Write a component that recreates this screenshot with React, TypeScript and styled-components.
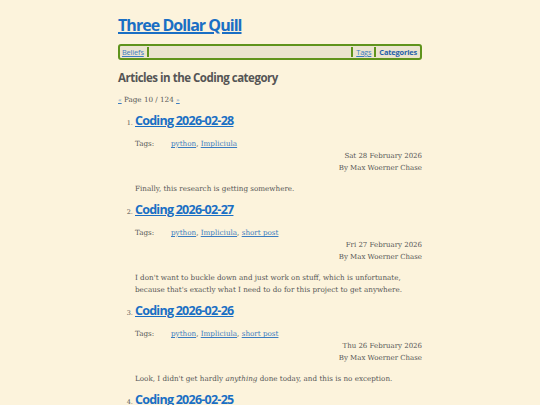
import React from "react";
import styled, { createGlobalStyle } from "styled-components";

const Global = createGlobalStyle`
  html, body { margin: 0; padding: 0; background: #fcf3dc; }
  body { font-family: "DejaVu Serif", serif; color: #444; }
`;

const Page = styled.div`
  width: 304px;
  margin: 0 auto;
  padding-top: 14px;
`;

const SiteTitle = styled.a`
  display: block;
  font-family: "Open Sans", sans-serif;
  font-weight: 700;
  font-size: 16px;
  letter-spacing: -0.95px;
  color: #1a6fc4;
  text-decoration: underline;
  text-decoration-thickness: 1.5px;
  line-height: 22px;
`;

const Nav = styled.nav`
  margin-top: 8px;
  display: flex;
  align-items: stretch;
  height: 12px;
  border: 2px solid #5f931c;
  border-radius: 3px;
  background: #ebe4cf;
  padding: 0 1px 0 0;
`;

const NavItem = styled.a<{ $current?: boolean }>`
  font-family: "Open Sans", sans-serif;
  font-size: 7.4px;
  letter-spacing: -0.15px;
  line-height: 12px;
  padding: 0 2px;
  color: ${(p) => (p.$current ? "#1f5fa8" : "#3b7cc0")};
  font-weight: ${(p) => (p.$current ? 700 : 400)};
  text-decoration: ${(p) => (p.$current ? "none" : "underline")};
`;

const Sep = styled.span`
  width: 2px;
  background: #5f931c;
  margin: 1px 1px;
`;

const Spacer = styled.span`
  flex: 1;
`;

const Heading = styled.h1`
  margin: 10px 0 0;
  font-family: "Open Sans", sans-serif;
  font-size: 11.5px;
  letter-spacing: -0.5px;
  font-weight: 700;
  color: #555;
  line-height: 16px;
`;

const Pager = styled.p`
  margin: 9px 0 0;
  font-size: 7.2px;
  line-height: 10px;
  color: #555;
  a { color: #3b7cc0; font-size: 6px; }
`;

const List = styled.ol`
  margin: 8px 0 0;
  padding: 0 0 0 17px;
  list-style: decimal;
`;

const Item = styled.li`
  font-size: 6.5px;
  color: #555;
  margin-bottom: 7px;
`;

const ItemTitle = styled.a`
  font-family: "Open Sans", sans-serif;
  font-weight: 700;
  font-size: 12.5px;
  letter-spacing: -0.75px;
  color: #1a6fc4;
  text-decoration: underline;
  line-height: 16px;
`;

const TagRow = styled.div`
  display: flex;
  margin-top: 9px;
  font-size: 7.2px;
  line-height: 12px;
  color: #555;
`;

const TagLabel = styled.span`
  width: 36px;
`;

const TagLink = styled.a`
  color: #3b7cc0;
  text-decoration: underline;
`;

const Meta = styled.div`
  text-align: right;
  font-size: 7px;
  line-height: 12px;
  color: #555;
`;

const Summary = styled.p`
  margin: 9px 0 0;
  font-size: 7.2px;
  line-height: 12px;
  color: #555;
`;

type Post = {
  date: string;
  day: string;
  tags: string[];
  summary: React.ReactNode;
};

const posts: Post[] = [
  {
    date: "2026-02-28",
    day: "Sat 28 February 2026",
    tags: ["python", "Impliciula"],
    summary: "Finally, this research is getting somewhere.",
  },
  {
    date: "2026-02-27",
    day: "Fri 27 February 2026",
    tags: ["python", "Impliciula", "short post"],
    summary:
      "I don't want to buckle down and just work on stuff, which is unfortunate, because that's exactly what I need to do for this project to get anywhere.",
  },
  {
    date: "2026-02-26",
    day: "Thu 26 February 2026",
    tags: ["python", "Impliciula", "short post"],
    summary: (
      <>
        Look, I didn't get hardly <em>anything</em> done today, and this is no exception.
      </>
    ),
  },
  {
    date: "2026-02-25",
    day: "Wed 25 February 2026",
    tags: ["python", "Impliciula"],
    summary: "",
  },
];

export default function App() {
  return (
    <>
      <Global />
      <Page>
        <SiteTitle href="#">Three Dollar Quill</SiteTitle>
        <Nav>
          <NavItem href="#">Beliefs</NavItem>
          <Sep />
          <Spacer />
          <Sep />
          <NavItem href="#">Tags</NavItem>
          <Sep />
          <NavItem href="#" $current>
            Categories
          </NavItem>
        </Nav>
        <Heading>Articles in the Coding category</Heading>
        <Pager>
          <a href="#">«</a> Page 10 / 124 <a href="#">»</a>
        </Pager>
        <List>
          {posts.map((p) => (
            <Item key={p.date}>
              <ItemTitle href="#">Coding {p.date}</ItemTitle>
              <TagRow>
                <TagLabel>Tags:</TagLabel>
                <span>
                  {p.tags.map((t, i) => (
                    <React.Fragment key={t}>
                      <TagLink href="#">{t}</TagLink>
                      {i < p.tags.length - 1 ? ", " : ""}
                    </React.Fragment>
                  ))}
                </span>
              </TagRow>
              <Meta>{p.day}</Meta>
              <Meta>By Max Woerner Chase</Meta>
              <Summary>{p.summary}</Summary>
            </Item>
          ))}
        </List>
      </Page>
    </>
  );
}
